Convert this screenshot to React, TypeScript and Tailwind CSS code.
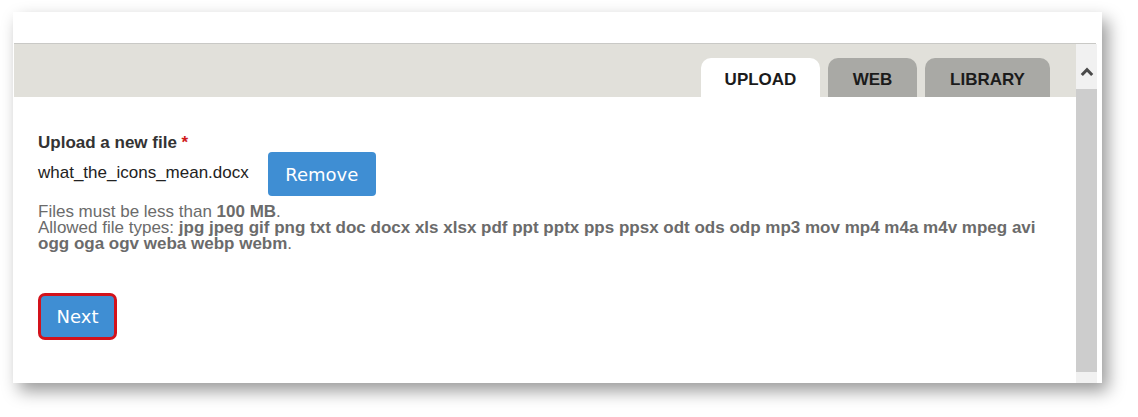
import React from 'react';

const fileTypes =
  'jpg jpeg gif png txt doc docx xls xlsx pdf ppt pptx pps ppsx odt ods odp mp3 mov mp4 m4a m4v mpeg avi ogg oga ogv weba webp webm';

const Tab: React.FC<{ label: string; active?: boolean; width: string }> = ({ label, active, width }) => (
  <div
    className={`${width} h-[39px] rounded-t-[10px] flex items-center justify-center pt-[5px] text-[17px] font-bold text-[#1b1b1b] ${
      active ? 'bg-white' : 'bg-[#a9a9a5]'
    }`}
  >
    {label}
  </div>
);

const App: React.FC = () => {
  return (
    <div className="w-[1138px] h-[417px] bg-white pt-[12px] pl-[13px] font-['Liberation_Sans',Arial,sans-serif]">
      <div className="w-[1089px] h-[371px] bg-white shadow-[6px_8px_16px_rgba(0,0,0,0.4)] flex flex-col">
        <div className="h-[31px] shrink-0" />
        <div className="h-px ml-px mr-[6px] bg-[#c9c9c6] shrink-0" />

        <div className="flex flex-1 min-h-0">
          {/* main pane */}
          <div className="w-[1062px] ml-px flex flex-col">
            <div className="h-[53px] bg-[#e1e0da] flex items-end justify-end gap-[8px] pr-[26px]">
              <Tab label="UPLOAD" active width="w-[119px]" />
              <Tab label="WEB" width="w-[89px]" />
              <Tab label="LIBRARY" width="w-[125px]" />
            </div>

            <div className="pl-[24px] pt-[37px]">
              <div className="text-[17px] font-bold text-[#333] leading-[18px]">
                Upload a new file <span className="text-[#d01a1a]">*</span>
              </div>

              <div className="flex items-center">
                <span className="text-[17px] text-[#222] mr-[19px] pb-[3px]">what_the_icons_mean.docx</span>
                <button className="w-[108px] h-[44px] rounded-[4px] bg-[#3f8ed3] text-white text-[18px] font-['DejaVu_Sans',Verdana,sans-serif]">
                  Remove
                </button>
              </div>

              <div className="mt-[8px] text-[17px] leading-[16px] text-[#6b6b6b] w-[1030px]">
                <div>
                  Files must be less than <strong>100 MB</strong>.
                </div>
                <div>
                  Allowed file types: <strong>{fileTypes}</strong>.
                </div>
              </div>

              <div className="mt-[41px]">
                <button className="w-[79px] h-[47px] rounded-[7px] border-[3px] border-[#d3121b] bg-[#3f8ed3] text-white text-[18px] font-['DejaVu_Sans',Verdana,sans-serif]">
                  Next
                </button>
              </div>
            </div>
          </div>

          {/* scrollbar */}
          <div className="w-[21px] flex flex-col bg-[#f1f1f1]">
            <div className="h-[45px] flex items-start justify-center pt-[23px]">
              <svg width="14" height="10" viewBox="0 0 14 10">
                <path d="M1.8 8 L7 2.6 L12.2 8" fill="none" stroke="#4a4a4a" strokeWidth="3" />
              </svg>
            </div>
            <div className="flex-1 bg-[#cdcdcd]" />
            <div className="h-[11px]" />
          </div>
          <div className="w-[5px] bg-white" />
        </div>
      </div>
    </div>
  );
};

export default App;
